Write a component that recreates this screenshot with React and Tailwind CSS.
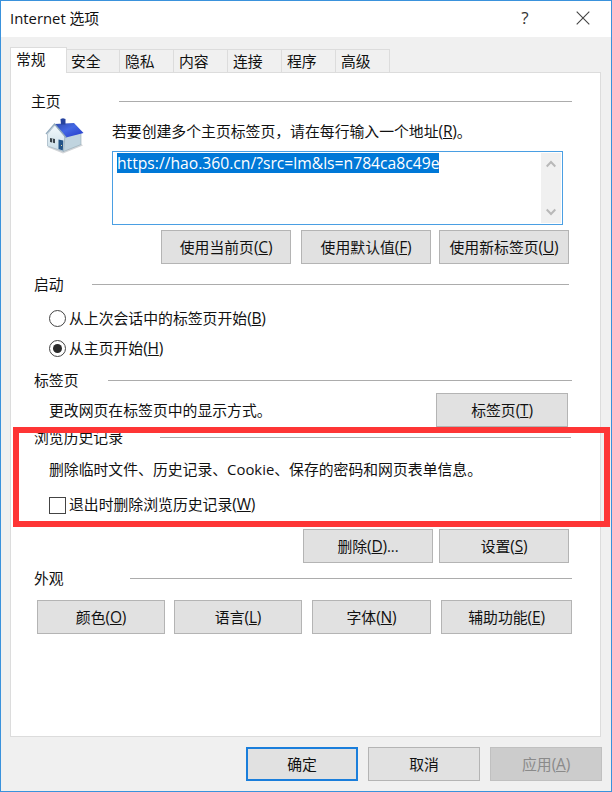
import React, { useState } from 'react';
import clsx from 'clsx';

const tabs = ['常规', '安全', '隐私', '内容', '连接', '程序', '高级'];

function HomeIcon() {
    return (
        <svg width="40" height="38" viewBox="0 0 40 38" className="block overflow-visible">
            <defs>
                <linearGradient id="roof" x1="0" y1="0" x2="1" y2="1">
                    <stop offset="0" stopColor="#2f4aa8" />
                    <stop offset="0.45" stopColor="#4468e4" />
                    <stop offset="1" stopColor="#2237c8" />
                </linearGradient>
                <linearGradient id="wall" x1="0" y1="0" x2="0" y2="1">
                    <stop offset="0" stopColor="#f4fafd" />
                    <stop offset="1" stopColor="#c8dce6" />
                </linearGradient>
            </defs>
            <path d="M2 28 L18 34.500 L38 26.500 L34 23 Z" fill="#d3d6d9" />
            <path d="M2.500 15 L10 6 L20 17 L18.500 32.500 L2.500 27 Z" fill="url(#wall)" stroke="#9db2c0" strokeWidth="0.7" />
            <path d="M20 17 L36 14 L36 25.500 L18.500 32.500 Z" fill="#c0d4df" stroke="#93a9b6" strokeWidth="0.6" />
            <path d="M9.500 5 L29 4 L38.500 14 L21 18.500 Z" fill="url(#roof)" />
            <path d="M1 15 L9.500 5 L21 18.500" fill="none" stroke="#93abbd" strokeWidth="1.300" />
            <path d="M15.500 0 L18 -0.800 L20.500 0 L20.500 5.500 L16 5.500 Z" fill="#26439f" />
            <path d="M5 19 L10 20 L10 24.300 L5 23 Z" fill="#39434b" />
            <path d="M7.500 19.500 V24" stroke="#dce8ee" strokeWidth="0.8" />
            <path d="M13.500 20.500 L18.300 21.500 L17.800 31.500 L13.500 30 Z" fill="#235488" />
            <path d="M16 26.500 H17" stroke="#e3d9a6" strokeWidth="1" />
        </svg>
    );
}

// Caption followed by the accelerator key, e.g. 颜色(O)
function Label({ text, hotkey, suffix }) {
    return (
        <span className="whitespace-nowrap">
            {text}
            {hotkey && (
                <span className="text-[15.500px] tracking-[-0.200px]">
                    (<span className="underline decoration-1 underline-offset-1">{hotkey}</span>)
                </span>
            )}
            {suffix}
        </span>
    );
}

function Button({ className, disabled, primary, ...label }) {
    return (
        <button
            disabled={disabled}
            className={clsx(
                'flex h-[34px] shrink-0 items-center justify-center',
                primary ? 'border-2 border-[#1a7edb]' : 'border',
                !primary && (disabled ? 'border-[#c0c0c0]' : 'border-[#b4b4b4]'),
                disabled ? 'bg-[#cccccc] text-[#8a8a8a]' : 'bg-[#e1e1e1]',
                className
            )}
        >
            <Label {...label} />
        </button>
    );
}

function SectionTitle({ title, className, lineClass }) {
    return (
        <div className={clsx('flex h-5 items-center', className)}>
            <span className="whitespace-nowrap">{title}</span>
            <span className={clsx('ml-auto h-px bg-[#acacac]', lineClass)} />
        </div>
    );
}

function Radio({ checked, onClick, className, ...label }) {
    return (
        <div className={clsx('flex h-5 items-center gap-[3px] pl-[38px]', className)} onClick={onClick}>
            <span className="flex size-[17px] items-center justify-center rounded-full border border-[#444] bg-white">
                {checked && <span className="size-[9px] rounded-full bg-[#2a2a2a]" />}
            </span>
            <Label {...label} />
        </div>
    );
}

export default function App() {
    const [startup, setStartup] = useState('home');

    return (
        <div className="relative flex h-[792px] w-[612px] flex-col overflow-hidden border border-[#3a92dc] bg-[#f0f0f0] font-['Open_Sans','Noto_Sans_CJK_SC',sans-serif] text-[14.85px] leading-5 text-[#111]">
            {/* Title bar */}
            <header className="flex h-9 shrink-0 items-center bg-white pb-[2px] pl-[9px]">
                <span>Internet 选项</span>
                <span className="ml-auto w-[10px] text-center text-[17px] text-[#333]">?</span>
                <svg width="14" height="14" viewBox="0 0 14 14" className="mr-[21px] ml-[46px]" stroke="#444" strokeWidth="1.1">
                    <path d="M0.700 0.700 L13.300 13.300 M13.300 0.700 L0.700 13.300" />
                </svg>
            </header>

            {/* Tabs */}
            <nav className="z-10 -mb-px flex h-[26px] shrink-0 items-end pl-[9px] mt-[10px]">
                {tabs.map((tab, idx) => (
                    <div
                        key={tab}
                        className={clsx(
                            'flex border-[#dcdcdc]',
                            idx === 0
                                ? 'h-[26px] w-[57px] border-x border-t bg-white pt-px pl-[5px]'
                                : 'h-6 border-t border-r border-b pt-px',
                            idx === 1 && 'w-[53px] pl-[4px]',
                            idx > 1 && 'w-[54px] pl-[5px]'
                        )}
                    >
                        {tab}
                    </div>
                ))}
            </nav>

            <main className="mx-[9px] flex h-[665px] w-[591px] shrink-0 flex-col border border-[#dcdcdc] bg-white">
                <SectionTitle title="主页" className="mt-[18px] mr-[28px] ml-[20px]" lineClass="w-[453px]" />
                <div className="mt-[8px] flex h-[106px] pl-[34px]">
                    <HomeIcon />
                    <div className="ml-[27px] flex flex-col pt-[2px]">
                        <Label text="若要创建多个主页标签页，请在每行输入一个地址" hotkey="R" suffix="。" />
                        <div className="mt-[10px] flex h-[74px] w-[451px] justify-between border border-[#4a9fe3] bg-white p-px">
                            <span className="ml-[3px] h-5 bg-[#0078d7] text-[15.680px] leading-[21px] whitespace-nowrap text-white">
                                https://hao.360.cn/?src=lm&amp;ls=n784ca8c49e
                            </span>
                            <div className="flex w-5 flex-col items-center justify-between bg-[#f0f0f0] py-[7px]">
                                <svg width="10" height="8" viewBox="0 0 10 8" fill="none" stroke="#b8b8b8" strokeWidth="2">
                                    <path d="M0.700 6.500 L5 2 L9.300 6.500" />
                                </svg>
                                <svg width="10" height="8" viewBox="0 0 10 8" fill="none" stroke="#b8b8b8" strokeWidth="2">
                                    <path d="M0.700 1.500 L5 6 L9.300 1.500" />
                                </svg>
                            </div>
                        </div>
                    </div>
                </div>
                <div className="mt-[5px] flex pl-[150px]">
                    <Button text="使用当前页" hotkey="C" className="w-[130px]" />
                    <Button text="使用默认值" hotkey="F" className="ml-[10px] w-[130px]" />
                    <Button text="使用新标签页" hotkey="U" className="ml-[8px] w-[130px]" />
                </div>

                <SectionTitle title="启动" className="mt-[10px] mr-[31px] ml-[23px]" lineClass="w-[477px]" />
                <Radio
                    text="从上次会话中的标签页开始"
                    hotkey="B"
                    checked={startup === 'last'}
                    onClick={() => setStartup('last')}
                    className="mt-[14px]"
                />
                <Radio
                    text="从主页开始"
                    hotkey="H"
                    checked={startup === 'home'}
                    onClick={() => setStartup('home')}
                    className="mt-[10px]"
                />

                <SectionTitle title="标签页" className="mt-[12px] mr-[28px] ml-[23px]" lineClass="w-[464px]" />
                <div className="mt-[3px] flex h-[34px] items-center justify-between pr-[32px] pl-[38px]">
                    <span>更改网页在标签页中的显示方式。</span>
                    <Button text="标签页" hotkey="T" className="w-[132px]" />
                </div>

                <SectionTitle title="浏览历史记录" className="mr-[29px] ml-[23px]" lineClass="w-[411px]" />
                <p className="mt-[12px] pl-[38px] whitespace-nowrap">删除临时文件、历史记录、Cookie、保存的密码和网页表单信息。</p>
                <div className="mt-[15px] flex h-5 items-center gap-[3px] pl-[38px]">
                    <span className="mt-[3px] size-[17px] border border-[#444] bg-white" />
                    <Label text="退出时删除浏览历史记录" hotkey="W" />
                </div>
                <div className="mt-[15px] flex justify-end gap-[6px] pr-[31px]">
                    <Button text="删除" hotkey="D" suffix="..." className="w-[130px]" />
                    <Button text="设置" hotkey="S" className="w-[130px]" />
                </div>

                <SectionTitle title="外观" className="mt-[5px] mr-[28px] ml-[23px]" lineClass="w-[442px]" />
                <div className="mt-[12px] flex pl-[26px]">
                    <Button text="颜色" hotkey="O" className="w-[128px]" />
                    <Button text="语言" hotkey="L" className="ml-[9px] w-[128px]" />
                    <Button text="字体" hotkey="N" className="ml-[10px] w-[119px]" />
                    <Button text="辅助功能" hotkey="E" className="ml-[10px] w-[131px]" />
                </div>
            </main>

            <footer className="mt-[10px] flex justify-end gap-[10px] pr-[9px]">
                <Button text="确定" primary className="w-[112px]" />
                <Button text="取消" className="w-[112px]" />
                <Button text="应用" hotkey="A" disabled className="w-[112px]" />
            </footer>

            {/* Highlight frame around the history section */}
            <div className="pointer-events-none absolute top-[426px] left-[12px] z-20 h-[100px] w-[597px] border-[6px] border-[#fe3535]" />
        </div>
    );
}
